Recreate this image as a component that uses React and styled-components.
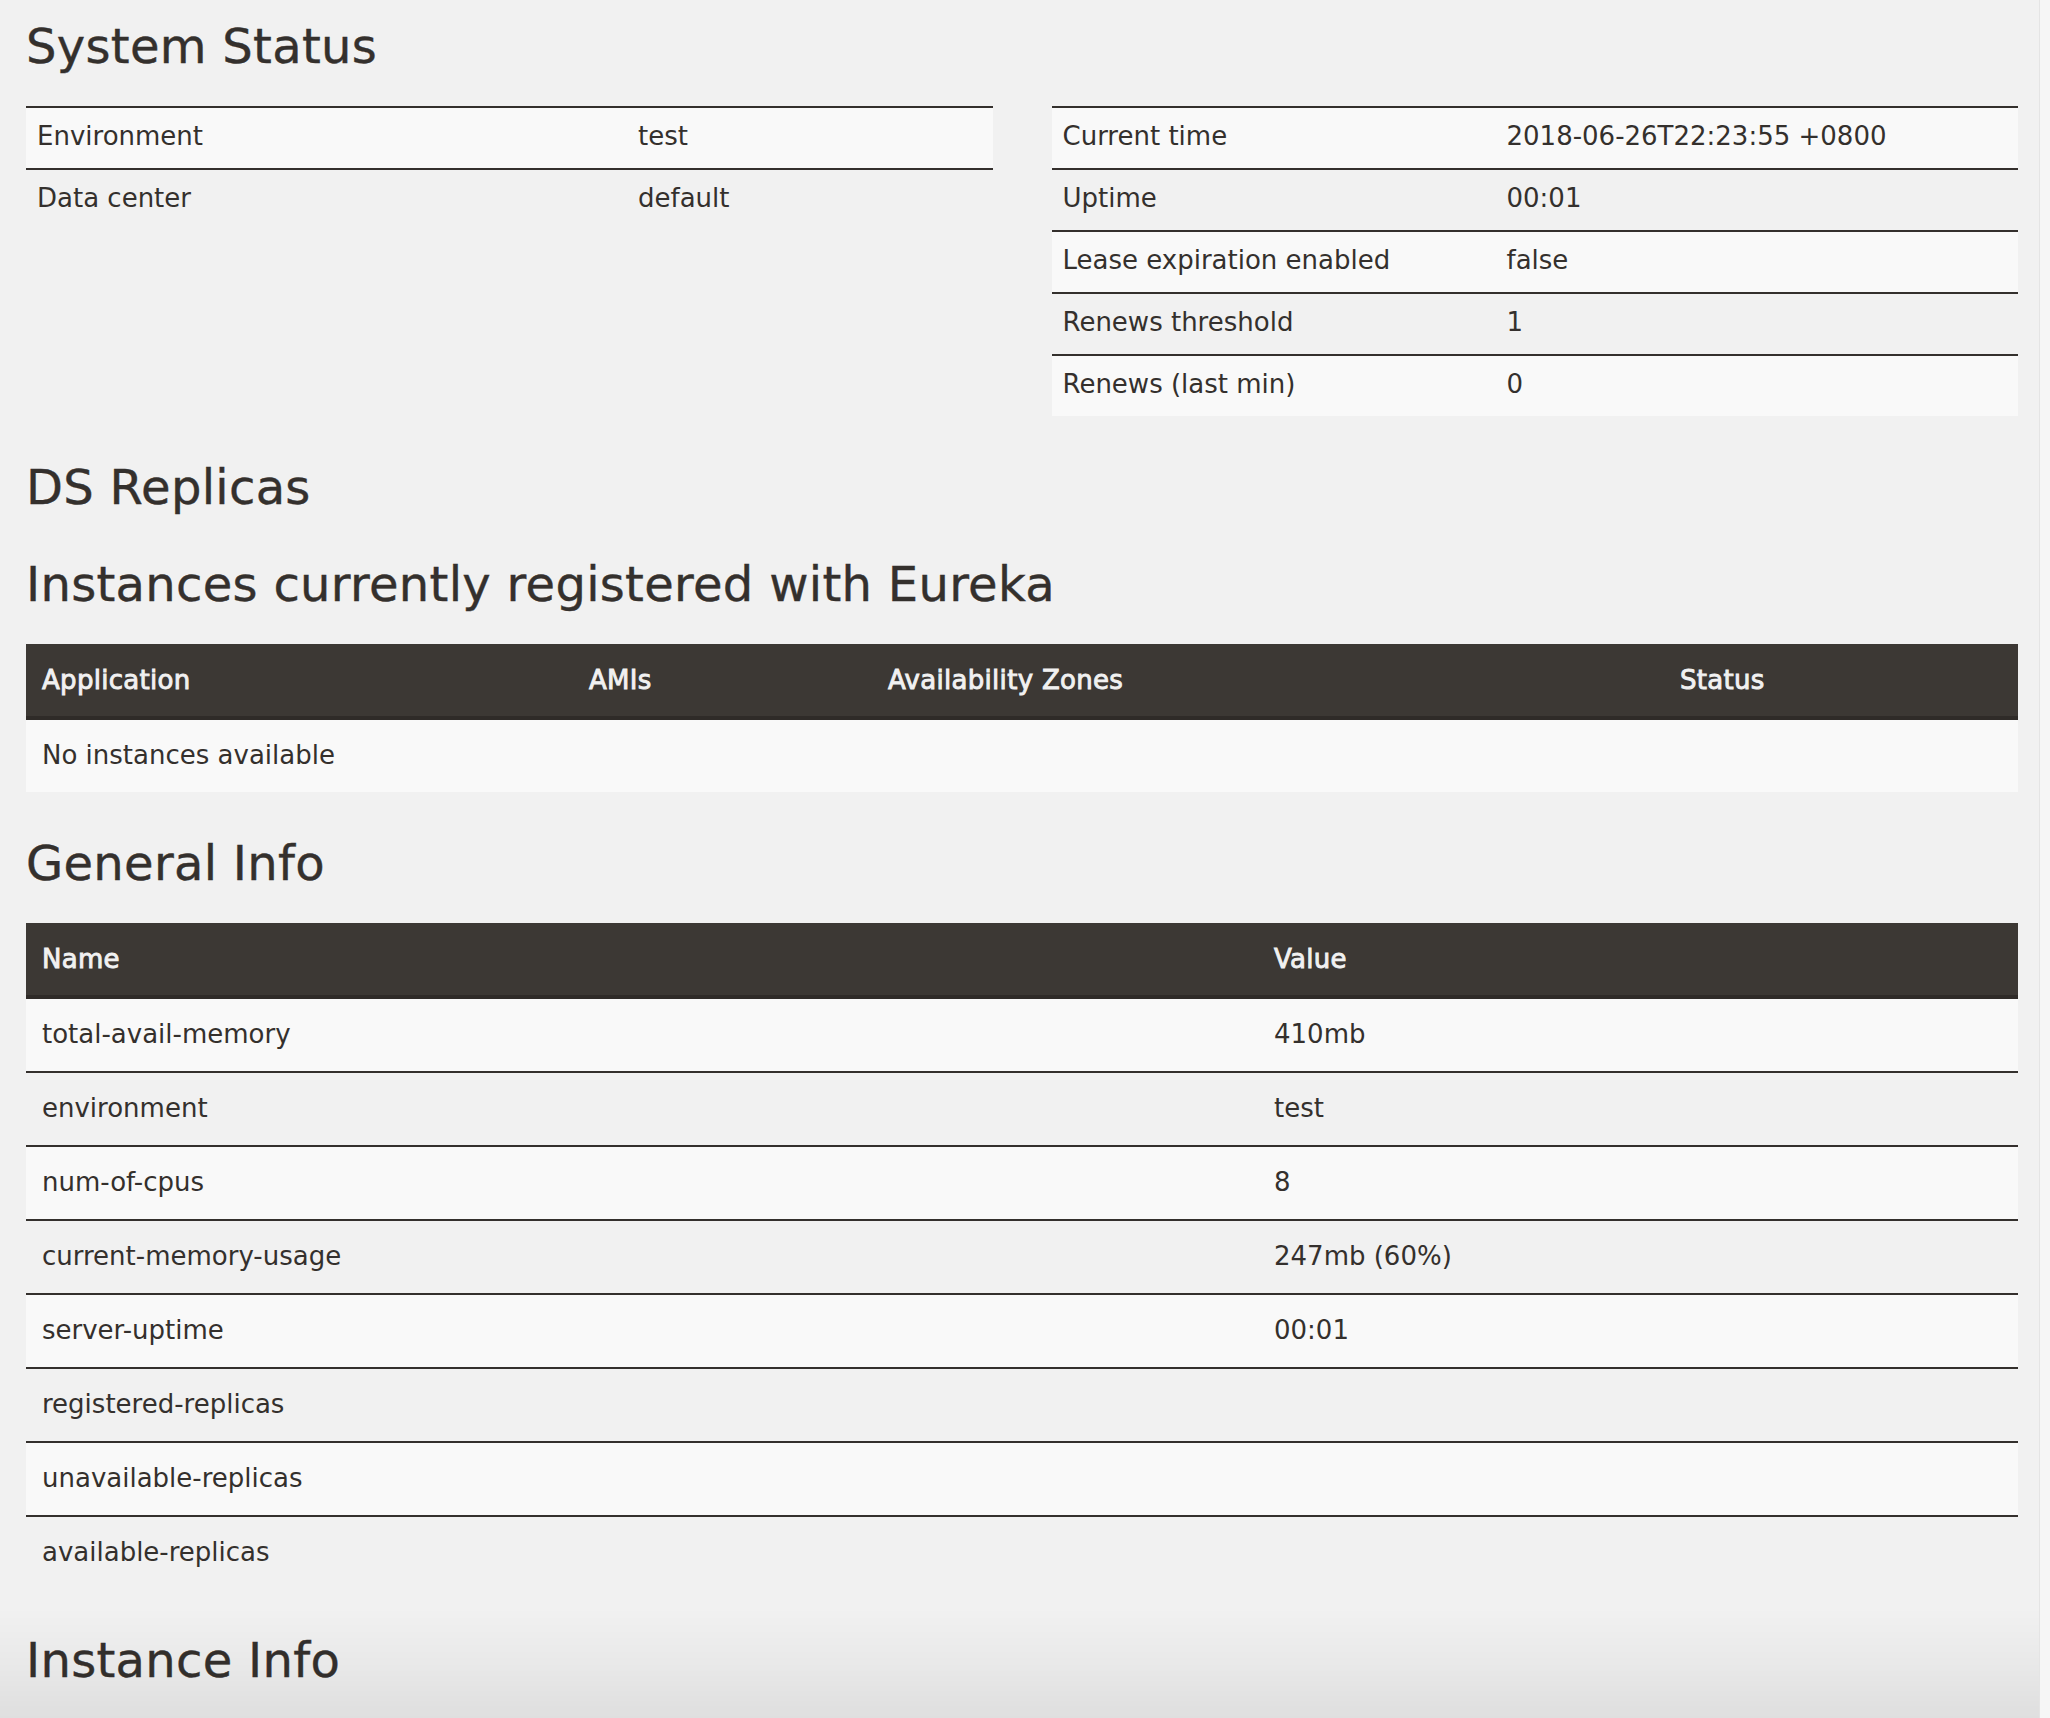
import React from 'react';
import styled, { createGlobalStyle } from 'styled-components';

const GlobalStyle = createGlobalStyle`
  html, body {
    margin: 0;
    padding: 0;
    background: #f1f1f1;
  }
  body {
    font-family: "DejaVu Sans", "Liberation Sans", sans-serif;
    color: #34302d;
  }
`;

const Page = styled.main`
  padding: 20px 32px 140px 26px;
  min-height: 100vh;
  box-sizing: border-box;
`;

const Heading = styled.h2`
  font-family: "DejaVu Sans", "Liberation Sans", sans-serif;
  font-weight: normal;
  font-size: 48px;
  line-height: 52px;
  letter-spacing: 0.3px;
  -webkit-text-stroke: 0.4px #34302d;
  color: #34302d;
  margin: ${(p) => (p.$first ? '0' : '45px')} 0 34px;
`;

const TwoColumns = styled.div`
  display: grid;
  grid-template-columns: 1fr 1fr;
  column-gap: 59px;
  align-items: start;
`;

const StatusTable = styled.table`
  width: 100%;
  border-collapse: collapse;
  table-layout: fixed;
  font-size: 26px;
  line-height: 38px;

  tbody tr:nth-child(odd) {
    background: #f9f9f9;
  }
`;

const StatusCell = styled.td`
  border-top: 2px solid #34302d;
  padding: 9px 12px 13px 11px;
  vertical-align: top;
  white-space: nowrap;
`;

const DataTable = styled.table`
  width: 100%;
  border-collapse: collapse;
  table-layout: fixed;
  font-size: 26px;
  line-height: 38px;

  tbody tr:nth-child(odd) {
    background: #f9f9f9;
  }
  tbody tr + tr td {
    border-top: 2px solid #34302d;
  }
`;

const HeadCell = styled.th`
  background: #3c3834;
  color: #f1f1f1;
  text-align: left;
  font-weight: normal;
  letter-spacing: 0.3px;
  -webkit-text-stroke: 0.9px #f1f1f1;
  padding: 17px 16px 17px 16px;
  border-bottom: 4px solid #2f2b28;
  white-space: nowrap;
`;

const BodyCell = styled.td`
  padding: 16px 16px 18px 16px;
  white-space: nowrap;
`;

const ScrollTrack = styled.div`
  position: fixed;
  top: 0;
  right: 0;
  bottom: 0;
  width: 10px;
  background: #f6f6f6;
  border-left: 1px solid #e4e4e4;
  pointer-events: none;
`;

const BottomShade = styled.div`
  position: fixed;
  left: 0;
  right: 0;
  bottom: 0;
  height: 110px;
  background: linear-gradient(to bottom, rgba(0, 0, 0, 0) 0%, rgba(0, 0, 0, 0.035) 55%, rgba(0, 0, 0, 0.075) 100%);
  pointer-events: none;
`;

const leftStatus = [
  ['Environment', 'test'],
  ['Data center', 'default'],
];

const rightStatus = [
  ['Current time', '2018-06-26T22:23:55 +0800'],
  ['Uptime', '00:01'],
  ['Lease expiration enabled', 'false'],
  ['Renews threshold', '1'],
  ['Renews (last min)', '0'],
];

const generalInfo = [
  ['total-avail-memory', '410mb'],
  ['environment', 'test'],
  ['num-of-cpus', '8'],
  ['current-memory-usage', '247mb (60%)'],
  ['server-uptime', '00:01'],
  ['registered-replicas', ''],
  ['unavailable-replicas', ''],
  ['available-replicas', ''],
];

function KeyValueTable({ rows, labelWidth }) {
  return (
    <StatusTable>
      <colgroup>
        <col style={{ width: labelWidth }} />
        <col />
      </colgroup>
      <tbody>
        {rows.map(([k, v]) => (
          <tr key={k}>
            <StatusCell>{k}</StatusCell>
            <StatusCell>{v}</StatusCell>
          </tr>
        ))}
      </tbody>
    </StatusTable>
  );
}

export default function App() {
  return (
    <>
      <GlobalStyle />
      <Page>
        <Heading $first>System Status</Heading>
        <TwoColumns>
          <KeyValueTable rows={leftStatus} labelWidth="601px" />
          <KeyValueTable rows={rightStatus} labelWidth="444px" />
        </TwoColumns>

        <Heading>DS Replicas</Heading>
        <Heading>Instances currently registered with Eureka</Heading>
        <DataTable>
          <colgroup>
            <col style={{ width: '547px' }} />
            <col style={{ width: '299px' }} />
            <col style={{ width: '792px' }} />
            <col />
          </colgroup>
          <thead>
            <tr>
              <HeadCell>Application</HeadCell>
              <HeadCell>AMIs</HeadCell>
              <HeadCell>Availability Zones</HeadCell>
              <HeadCell>Status</HeadCell>
            </tr>
          </thead>
          <tbody>
            <tr>
              <BodyCell colSpan={4}>No instances available</BodyCell>
            </tr>
          </tbody>
        </DataTable>

        <Heading>General Info</Heading>
        <DataTable>
          <colgroup>
            <col style={{ width: '1232px' }} />
            <col />
          </colgroup>
          <thead>
            <tr>
              <HeadCell>Name</HeadCell>
              <HeadCell>Value</HeadCell>
            </tr>
          </thead>
          <tbody>
            {generalInfo.map(([k, v]) => (
              <tr key={k}>
                <BodyCell>{k}</BodyCell>
                <BodyCell>{v}</BodyCell>
              </tr>
            ))}
          </tbody>
        </DataTable>

        <Heading>Instance Info</Heading>
      </Page>
      <BottomShade />
      <ScrollTrack />
    </>
  );
}
